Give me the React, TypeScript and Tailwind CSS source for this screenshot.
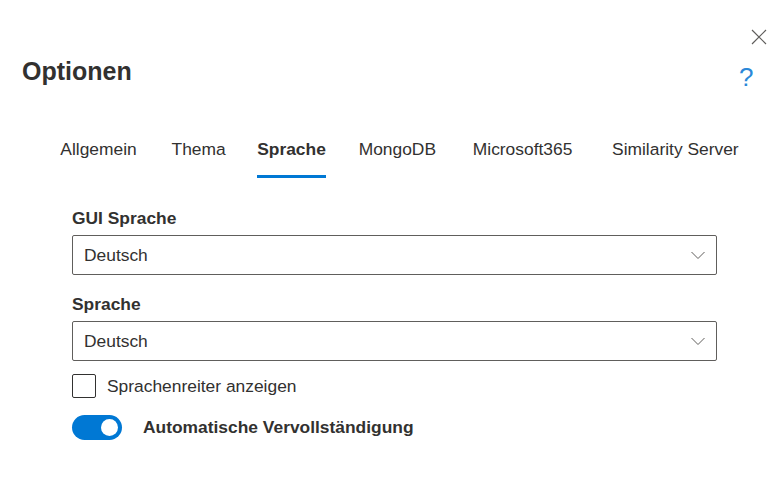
import React, { useState } from "react";

const tabs = ["Allgemein", "Thema", "Sprache", "MongoDB", "Microsoft365", "Similarity Server"];

const Chevron = () => (
  <svg width="16" height="16" viewBox="0 0 16 16" fill="none" stroke="#605e5c" strokeWidth="1">
    <path d="M1.5 5l6.5 6.5L14.5 5" />
  </svg>
);

const Dropdown = ({ label, value }: { label: string; value: string }) => (
  <div className="flex flex-col">
    <label className="text-[17.4px] leading-[24px] font-bold text-[#323130] mb-[5px]">{label}</label>
    <div className="flex items-center justify-between h-[40px] border border-[#605e5c] rounded-[2px] pl-[11px] pr-[10px]">
      <span className="text-[17.4px] text-[#323130]">{value}</span>
      <Chevron />
    </div>
  </div>
);

const App = () => {
  const [active, setActive] = useState("Sprache");
  const [checked, setChecked] = useState(false);
  const [auto, setAuto] = useState(true);

  return (
    <div className="relative w-[767px] h-[493px] bg-white overflow-hidden font-['Liberation_Sans',Arial,sans-serif] text-[#323130]">
      {/* close + help */}
      <button className="absolute left-[751px] top-[29px] text-[#605e5c]">
        <svg width="16" height="16" viewBox="0 0 16 16" stroke="currentColor" strokeWidth="1.2" fill="none">
          <path d="M1 1l14 14M15 1L1 15" />
        </svg>
      </button>
      <span className="absolute left-[739px] top-[62px] text-[26px] leading-[30px] font-light text-[#2b88d8]">?</span>

      <h1 className="pl-[22px] pt-[55px] text-[25px] leading-[32px] font-bold text-[#323130]">Optionen</h1>

      {/* tabs: hidden bold copy reserves the width so labels don't shift */}
      <div className="flex gap-[30.5px] pl-[57px] mt-[50px]">
        {tabs.map((t) => (
          <button
            key={t}
            onClick={() => setActive(t)}
            className="flex flex-col items-stretch text-[17.4px] leading-[24px] text-[#323130]"
          >
            <span className="grid text-center whitespace-nowrap">
              <span className="col-start-1 row-start-1 font-bold invisible">{t}</span>
              <span className={`col-start-1 row-start-1 ${active === t ? "font-bold" : ""}`}>{t}</span>
            </span>
            <span className={`mt-[14px] h-[3px] ${active === t ? "bg-[#0078d4]" : "bg-transparent"}`} />
          </button>
        ))}
      </div>

      {/* content */}
      <div className="pl-[72px] pr-[50px] mt-[28px] flex flex-col">
        <Dropdown label="GUI Sprache" value="Deutsch" />
        <div className="mt-[17px]">
          <Dropdown label="Sprache" value="Deutsch" />
        </div>

        <label className="flex items-center gap-[11px] mt-[12px] cursor-pointer" onClick={() => setChecked(!checked)}>
          <span className="w-[24px] h-[24px] border border-[#323130] rounded-[2px] bg-white" />
          <span className="text-[17.4px] text-[#323130]">Sprachenreiter anzeigen</span>
        </label>

        <div className="flex items-center gap-[21px] mt-[15px]">
          <button
            onClick={() => setAuto(!auto)}
            className={`relative w-[50px] h-[25px] rounded-full ${auto ? "bg-[#0078d4]" : "bg-white border border-[#323130]"}`}
          >
            <span
              className={`absolute top-[4px] w-[17px] h-[17px] rounded-full ${
                auto ? "left-[29px] bg-white" : "left-[4px] bg-[#323130]"
              }`}
            />
          </button>
          <span className="text-[17.4px] font-bold text-[#323130]">Automatische Vervollständigung</span>
        </div>
      </div>
    </div>
  );
};

export default App;
